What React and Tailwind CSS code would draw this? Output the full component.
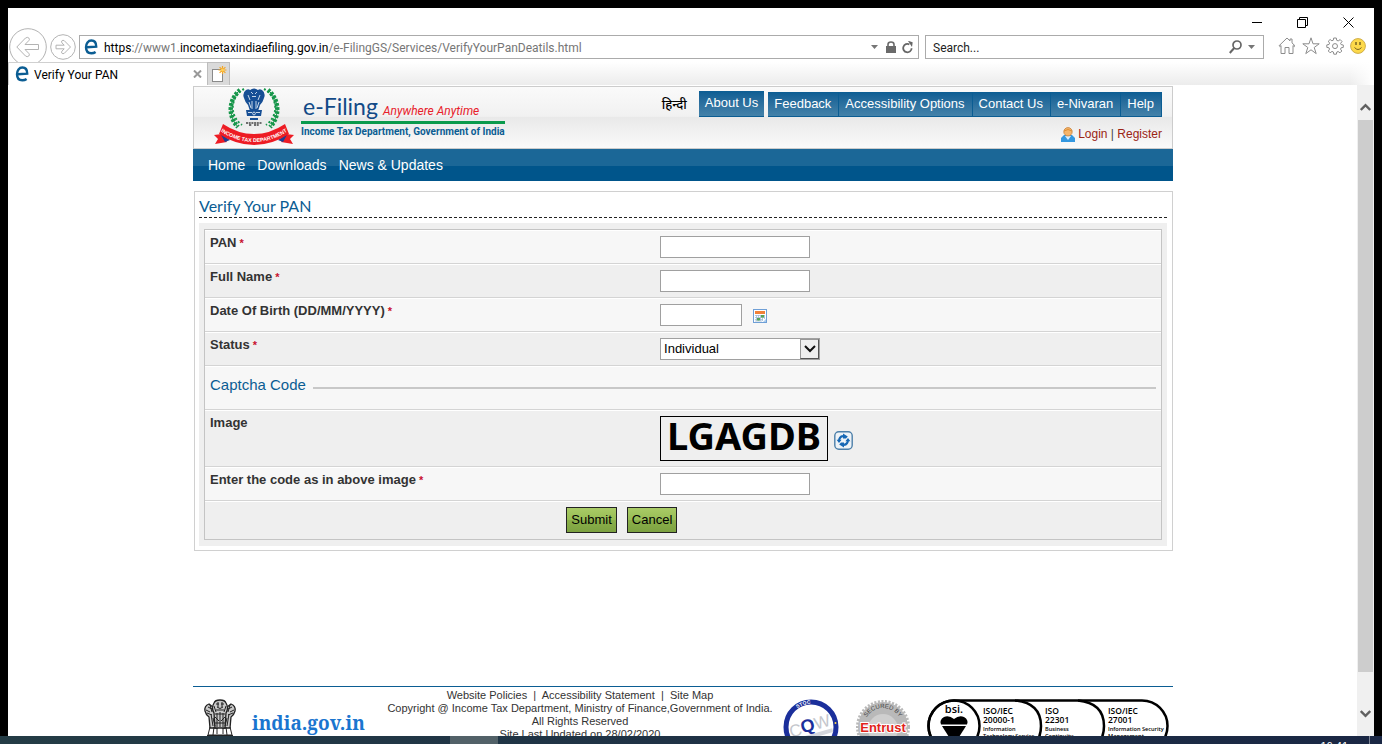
import React from "react";

const ieBlue = "#0b5d93";

function IELogo() {
  return (
    <svg width="14" height="16" viewBox="0 0 14 16" className="shrink-0" aria-hidden="true">
      <path d="M2.600 8.300L12.200 7.600C12.200 3.800 10.400 1.500 7.400 1.500C4.200 1.500 2 4.400 2 8.300C2 12 4 14.300 7.300 14.300C9 14.300 10.500 13.800 11.600 13" fill="none" stroke={ieBlue} strokeWidth="2.400" />
    </svg>
  );
}

function Caret() {
  return (
    <svg width="7" height="4" viewBox="0 0 7 4" aria-hidden="true">
      <path d="M0 0H7L3.5 4Z" fill="#767676" />
    </svg>
  );
}

function TitleBar() {
  return (
    <div className="flex h-5 items-end justify-end gap-[35px] pr-5">
      <button type="button" aria-label="Minimize">
        <svg width="10" height="11" viewBox="0 0 10 11" className="block"><path d="M0 5.5H10" stroke="#000" /></svg>
      </button>
      <button type="button" aria-label="Restore">
        <svg width="11" height="11" viewBox="0 0 11 11" className="block" fill="none" stroke="#000">
          <path d="M.5 2.5H8.5V10.5H.5ZM2.5 2.5V.5H10.5V8.5H8.5" />
        </svg>
      </button>
      <button type="button" aria-label="Close">
        <svg width="11" height="11" viewBox="0 0 11 11" className="block"><path d="M.5 .5L10.5 10.5M10.5 .5L.5 10.5" stroke="#000" /></svg>
      </button>
    </div>
  );
}

function Toolbar() {
  return (
    <div className="flex h-[34px] items-start overflow-hidden pl-px">
      <button type="button" aria-label="Back" className="shrink-0">
        <svg width="38" height="38" viewBox="0 0 38 38" className="block" fill="none" stroke="#b3b3b3">
          <circle cx="19" cy="19" r="18.3" />
          <path d="M7.8 19L16.5 10Q18.5 8.6 20 10.2Q21 11.4 19.8 12.6L16 16.5H29.5V21.5H16L19.8 25.4Q21 26.8 19.8 28Q18.2 29.4 16.5 28Z" />
        </svg>
      </button>
      <button type="button" aria-label="Forward" className="mt-[6px] ml-[3px] shrink-0">
        <svg width="26" height="26" viewBox="0 0 26 26" className="block" fill="none" stroke="#b3b3b3">
          <circle cx="13" cy="13" r="12.3" />
          <path d="M20.5 13L14.2 6.6Q12.8 5.8 11.8 6.9Q11.2 8 12 8.9L14.2 11.2H6V14.8H14.2L12 17.1Q11.2 18 11.8 19.1Q12.8 20.2 14.2 19.4Z" />
        </svg>
      </button>
      <div className="mt-[7px] ml-[3px] flex h-6 min-w-0 flex-[829] items-center border border-[#ababab] pr-[5px] pl-1 text-xs">
        <IELogo />
        <div role="textbox" aria-label="Address" className="ml-[6px] flex-1 truncate pt-px text-[#767676]">
          <span className="text-black">https</span>://www1.<span className="text-black">incometaxindiaefiling.gov.in</span>/e-FilingGS/Services/VerifyYourPanDeatils.html
        </div>
        <button type="button" aria-label="Show address list"><Caret /></button>
        <svg width="10" height="12" viewBox="0 0 10 12" className="ml-2" aria-hidden="true">
          <rect y="5" width="10" height="7" fill="#6a6a6a" />
          <path d="M2 6V3.5Q2 1 5 1T8 3.5V6" fill="none" stroke="#6a6a6a" strokeWidth="1.6" />
        </svg>
        <button type="button" aria-label="Refresh" className="ml-[6px]">
          <svg width="11" height="13" viewBox="0 0 11 13" className="block">
            <path d="M9.6 7.2A4.2 4.2 0 1 1 7.4 3.4" fill="none" stroke="#666" strokeWidth="1.8" />
            <path d="M5.4 0L10.4 1V5.6Z" fill="#666" transform="rotate(8 8 3)" />
          </svg>
        </button>
      </div>
      <div className="mt-[7px] ml-[6px] flex h-6 min-w-0 flex-[322] items-center border border-[#ababab] pr-2 pl-[7px] text-xs">
        <input aria-label="Search" placeholder="Search..." className="min-w-0 flex-1 pt-px outline-none placeholder:text-[#222]" />
        <svg width="13" height="14" viewBox="0 0 13 14" fill="none" stroke="#666" aria-hidden="true">
          <circle cx="8" cy="5" r="4" strokeWidth="1.7" /><path d="M5.2 8L.8 13" strokeWidth="2" />
        </svg>
        <button type="button" aria-label="Search options" className="ml-[6px]"><Caret /></button>
      </div>
      <div className="mt-[9px] mr-2 ml-[14px] flex shrink-0 gap-[6px]">
        <button type="button" aria-label="Home">
          <svg width="18" height="18" viewBox="0 0 18 18" fill="none" stroke="#8c8c8c" className="block">
            <path d="M3 8.5L1.8 9.6L1 8.8L9 1L12 3.9V2H14V5.9L17 8.8L16.2 9.6L15 8.5V16.5H11V10.5H7V16.5H3Z" />
          </svg>
        </button>
        <button type="button" aria-label="Favorites">
          <svg width="18" height="18" viewBox="0 0 18 18" fill="none" stroke="#8c8c8c" className="block">
            <path d="M9 .8L11 6.8H17.2L12.2 10.5L14.2 16.6L9 12.8L3.8 16.6L5.8 10.5L.8 6.8H7Z" />
          </svg>
        </button>
        <button type="button" aria-label="Tools">
          <svg width="18" height="18" viewBox="0 0 18 18" fill="none" stroke="#8c8c8c" className="block">
            <path d="M7.7 1H10.3L10.7 3.3L12.2 3.9L14.2 2.6L16 4.5L14.6 6.4L15.1 7.6L17.3 8V10.4L15.1 10.8L14.5 12.2L15.8 14L14 15.8L12.1 14.5L10.8 15L10.4 17.2H7.8L7.4 15L6 14.4L4.1 15.8L2.3 14L3.6 12.1L3 10.8L.8 10.4V7.9L3 7.5L3.6 6.1L2.3 4.2L4.1 2.5L5.9 3.8L7.3 3.2Z" />
            <circle cx="9" cy="9.1" r="2.5" />
          </svg>
        </button>
        <button type="button" aria-label="Send feedback">
          <svg width="16" height="18" viewBox="0 0 16 18" className="block">
            <circle cx="8" cy="9" r="7.4" fill="#fdd94a" stroke="#cfae4a" />
            <path d="M6 5V8M10 5V8" stroke="#7a6420" strokeWidth="1.500" />
            <path d="M4.500 10.5Q8 14.500 11.500 10.5" fill="none" stroke="#7a6420" />
          </svg>
        </button>
      </div>
    </div>
  );
}

function TabStrip() {
  return (
    <div className="flex h-[23px] items-stretch bg-white">
      <div className="flex w-[199px] items-center border-t border-l border-[#d0d0d0] bg-white pr-[5px] pl-[6px] text-xs text-black">
        <IELogo />
        <span className="ml-[5px] flex-1 pt-px">Verify Your PAN</span>
        <button type="button" aria-label="Close tab">
          <svg width="9" height="8" viewBox="0 0 9 8" className="block"><path d="M1 .5L8 7.5M8 .5L1 7.5" stroke="#999" strokeWidth="2" /></svg>
        </button>
      </div>
      <button type="button" aria-label="New tab" className="w-[23px] border border-b-0 border-[#bdbdbd] bg-[#dadada] pl-1">
        <svg width="15" height="16" viewBox="0 0 15 16" className="block">
          <rect x=".5" y="3.5" width="10" height="12" fill="#fff" stroke="#8a8a8a" />
          <path d="M10.5 0V8M6.5 4H14.5M7.6 1.1L13.4 6.9M13.4 1.1L7.6 6.9" stroke="#f5a623" strokeWidth="1.2" />
          <circle cx="10.5" cy="4" r="1.5" fill="#ffd25a" />
        </svg>
      </button>
      <div className="flex flex-1 bg-linear-to-b from-white to-[#ececec]">
        <div className="ml-auto w-6 bg-linear-to-r from-transparent to-white" />
      </div>
    </div>
  );
}

function DepartmentEmblem() {
  return (
    <svg width="82" height="58" viewBox="0 0 82 58" className="mt-px shrink-0" role="img" aria-label="Income Tax Department emblem">
      <g fill="none" stroke="#16964a">
        <path d="M26 2A25 25 0 0 0 24 39M54 2A25 25 0 0 1 56 39" strokeWidth="4.5" strokeDasharray="2.6 1.4" />
        <path d="M30 1A21 21 0 0 0 28 37M50 1A21 21 0 0 1 52 37" strokeWidth="2" strokeDasharray="2 2.2" />
        <path d="M26 2A25 25 0 0 0 24 39M54 2A25 25 0 0 1 56 39" strokeWidth="1" />
      </g>
      <g fill="#174f95">
        <circle cx="40" cy="6" r="5.500" />
        <path d="M32 2Q28 5 30 10Q31 14 34 17L36 23H44L46 17Q49 14 50 10Q52 5 48 2Q45 0 43 3H37Q35 0 32 2Z" />
        <path d="M32 22H48L47 28H33ZM36 30H44V32H36Z" />
      </g>
      <g fill="none" stroke="#d9e5f2" strokeWidth=".9">
        <path d="M37 4L39 6M43 4L41 6M38 8.5H42M34 7L36 12M46 7L44 12M38 13V21M42 13V21M35 14L37 20M45 14L43 20M34 24.500H38M42 24.500H46" />
        <circle cx="40" cy="25.500" r="1.400" />
      </g>
      <path d="M32 35H48M35 37H38M40 37H45" stroke="#444" strokeWidth="1.500" strokeDasharray="2 .7" />
      <path d="M8 46L0 47L4 51L1 56L13 54ZM72 46L80 47L76 51L79 56L67 54Z" fill="#ed1c24" />
      <path d="M6 45L11 54L16 52ZM74 45L69 54L64 52Z" fill="#1c3f94" />
      <path d="M9 36Q24 46 40 46Q56 46 71 36L75 46Q58 57 40 57Q22 57 5 46Z" fill="#ed1c24" />
      <path id="ribbon-arc" d="M5 42.500Q22 54 40 54Q58 54 75 42.500" fill="none" />
      <text fill="#fff" fontSize="5.300" fontWeight="700" fontFamily="Liberation Sans, sans-serif" textAnchor="middle">
        <textPath href="#ribbon-arc" startOffset="50%">INCOME TAX DEPARTMENT</textPath>
      </text>
    </svg>
  );
}

function UserIcon() {
  return (
    <svg width="14" height="15" viewBox="0 0 14 15" aria-hidden="true">
      <path d="M0 15V11L3 8H11L14 11V15Z" fill="#3498e0" />
      <path d="M4 9L7 13L10 9Z" fill="#d9efff" />
      <circle cx="7" cy="4.800" r="4.200" fill="#f5b56b" stroke="#c9823a" strokeWidth=".8" />
      <path d="M3 4Q7 1 11 4" stroke="#dd8f35" fill="none" />
    </svg>
  );
}

const menuLink = "border-b border-[#0b5d93] bg-linear-to-b from-[#0b5d93] to-[#4482a9] pt-[3px] text-[13px] leading-[18px] text-white";
const menu = ["Feedback", "Accessibility Options", "Contact Us", "e-Nivaran", "Help"];

function SiteHeader() {
  return (
    <header>
      <div className="flex h-[63px] justify-between border border-[#ccc] bg-[linear-gradient(#fafafa,#f1f1f1_48%,#e9e9e9_50%,#fafafa)] pr-[10px] pl-5">
        <div className="flex gap-[5px]">
          <DepartmentEmblem />
          <div className="pt-[6px]">
            <div className="flex h-[31px] items-baseline gap-[5px] border-b-3 border-[#0a9a4c] pl-[2px]">
              <span className="font-['Lato',sans-serif] text-[23px] leading-[27px] text-[#124a87]">e-Filing</span>
              <span className="font-['Roboto',sans-serif] text-xs text-[#e8212b] italic">Anywhere Anytime</span>
            </div>
            <div className="font-['Roboto',sans-serif] text-[10px] leading-4 font-bold whitespace-nowrap text-[#0b5d93]">Income Tax Department, Government of India</div>
          </div>
        </div>
        <div className="pt-1">
          <div className="flex items-end">
            <a href="#hindi" lang="hi" className="mr-3 text-[13px] leading-6 font-medium text-black">हिन्दी</a>
            <a href="#about" className={menuLink + " mr-1 h-[26px] px-[6px]"}>About Us</a>
            <nav className="flex h-[25px]" aria-label="Help menu">
              {menu.map((item) => (
                <a key={item} href="#menu" className={menuLink + " border-r pr-[7px] pl-[6px]"}>{item}</a>
              ))}
            </nav>
          </div>
          <div className="mt-[9px] flex items-center justify-end gap-[3px] text-xs leading-4 text-[#9b2414]">
            <UserIcon />
            <span><a href="#login">Login</a> <span className="text-[#444]">|</span> <a href="#register">Register</a></span>
          </div>
        </div>
      </div>
      <nav aria-label="Main" className="flex h-8 items-center gap-3 bg-[linear-gradient(#1b6797_53%,#00558b_53%)] pl-[15px] text-sm text-white">
        <a href="#home">Home</a>
        <a href="#downloads">Downloads</a>
        <a href="#news">News &amp; Updates</a>
      </nav>
    </header>
  );
}

const inputStyle = "h-[22px] border border-[#a0a0a0] bg-white px-1 text-[13px] outline-none";

function Row({ label, htmlFor, required, alt, height = "h-[34px]", children }) {
  return (
    <div className={"grid grid-cols-[47.6%_1fr] border-t border-t-white border-b border-b-[#d4d4d4] " + height + (alt ? " bg-[#efefef]" : " bg-[#f7f7f7]")}>
      <label htmlFor={htmlFor} className="pt-1 pl-[5px] text-[13px] leading-4 font-bold text-[#333]">
        {label}
        {required && <span className="text-[11px] text-[#c8102e]"> *</span>}
      </label>
      <div className="flex items-start pt-[5px]">{children}</div>
    </div>
  );
}

function CalendarIcon() {
  return (
    <svg width="14" height="14" viewBox="0 0 14 14" className="block">
      <rect x=".5" y=".5" width="13" height="13" fill="#fff" stroke="#6f9fd6" />
      <rect x="2" y="2" width="10" height="3" fill="#f0813a" />
      <path d="M2 6.500H12M2 8.500H12M2 10.500H10M2 12H9M3.500 6V12M5.500 6V12M7.500 6V12M9.500 6V12M11.500 6V10" stroke="#a3bbd6" strokeWidth=".8" />
      <path d="M8 6H11V8.500H8ZM4 9H7V11.500H4Z" fill="#57a457" />
      <path d="M10 13L13 10V13Z" fill="#a9ccee" />
    </svg>
  );
}

function RefreshIcon() {
  return (
    <svg width="19" height="19" viewBox="0 0 19 19" className="block">
      <rect x=".8" y=".8" width="17.400" height="17.400" rx="4" fill="#eef3f7" stroke="#4c7fa9" strokeWidth="1.400" />
      <path d="M5.200 10A4.200 4.200 0 0 1 9 5.200M13.800 9A4.200 4.200 0 0 1 10 13.800" fill="none" stroke="#1768b5" strokeWidth="2.200" />
      <path d="M9 2.600L13.800 5.400L12 7.600H9ZM10 16.400L5.200 13.600L7 11.400H10ZM2.600 8.800H7.600L5 12ZM11.400 10.200H16.400L14 7Z" fill="#1768b5" />
    </svg>
  );
}

function VerifyForm() {
  return (
    <main className="mt-[10px] ml-px border border-[#d0d0d0] bg-white pr-[5px] pb-1 pl-1">
      <h1 className="h-[26px] border-b border-dashed border-[#222] pt-1 font-['Lato',sans-serif] text-base leading-5 text-[#0b5d93]">Verify Your PAN</h1>
      <div className="mt-[5px] bg-[#efefef] px-[5px] pt-[6px] pb-[6px]">
        <form className="border border-[#c4c4c4]" onSubmit={(e) => e.preventDefault()}>
          <Row label="PAN" htmlFor="pan" required><input id="pan" className={inputStyle + " w-[150px]"} /></Row>
          <Row label="Full Name" htmlFor="name" required alt><input id="name" className={inputStyle + " w-[150px]"} /></Row>
          <Row label="Date Of Birth (DD/MM/YYYY)" htmlFor="dob" required>
            <input id="dob" className={inputStyle + " w-[82px]"} />
            <button type="button" aria-label="Pick a date" className="mt-[5px] ml-[11px]"><CalendarIcon /></button>
          </Row>
          <Row label="Status" htmlFor="status" required alt>
            <div className="relative">
              <select id="status" defaultValue="Individual" className="block h-[22px] w-[160px] appearance-none rounded-none border border-[#a0a0a0] bg-white pl-[3px] text-[13px] text-black outline-none">
                <option>Individual</option>
                <option>Company</option>
                <option>Trust</option>
              </select>
              <div className="pointer-events-none absolute inset-y-px right-px flex w-[19px] items-center justify-center border border-t-[#999] border-r-[#555] border-b-[#555] border-l-[#999] bg-[#efefef]">
                <svg width="12" height="8" viewBox="0 0 12 8" aria-hidden="true"><path d="M1 1L6 6L11 1" fill="none" stroke="#111" strokeWidth="2" /></svg>
              </div>
            </div>
          </Row>
          <div className="flex h-11 items-center border-t border-b border-t-white border-b-[#d4d4d4] bg-[#f7f7f7] px-[5px] pb-[6px]">
            <h2 className="text-[15px] leading-5 text-[#0b5d93]">Captcha Code</h2>
            <div className="mt-[6px] ml-[7px] h-[2px] flex-1 bg-[#c8c8c8]" />
          </div>
          <Row label="Image" htmlFor="captcha" alt height="h-[57px]">
            <div className="flex h-[45px] w-[168px] items-start justify-center border border-black font-['Noto_Sans',sans-serif] text-[38px] leading-9 font-bold text-black">LGAGDB</div>
            <button type="button" aria-label="Refresh captcha" className="mt-[15px] ml-[6px]"><RefreshIcon /></button>
          </Row>
          <Row label="Enter the code as in above image" htmlFor="captcha" required><input id="captcha" className={inputStyle + " w-[150px]"} /></Row>
          <div className="flex h-[38px] gap-[10px] border-t border-white bg-[#efefef] pt-[5px] pl-[37.8%]">
            <button type="submit" className="h-[26px] border border-[#222] bg-[linear-gradient(#a9cb66,#97bd55_50%,#8bb049_50%,#7da242)] px-1 text-[13px] text-black">Submit</button>
            <button type="button" className="h-[26px] border border-[#222] bg-[linear-gradient(#a9cb66,#97bd55_50%,#8bb049_50%,#7da242)] px-1 text-[13px] text-black">Cancel</button>
          </div>
        </form>
      </div>
    </main>
  );
}

function AshokaEmblem() {
  return (
    <svg width="34" height="50" viewBox="0 0 34 50" className="shrink-0" role="img" aria-label="State Emblem of India">
      <g fill="#c8c8c8" stroke="#222" strokeWidth="1.300">
        <path d="M6 5Q1 7 2 12Q3 16 6 18L7 29H14L15 12ZM28 5Q33 7 32 12Q31 16 28 18L27 29H20L19 12Z" />
        <path d="M11 4Q12 1 17 1Q22 1 23 4Q26 9 23 14L22 29H12L11 14Q8 9 11 4Z" />
      </g>
      <g fill="none" stroke="#222">
        <path d="M13 5H16M18 5H21M14 8Q17 11 20 8M13 11L21 11M14 14V28M17 13V28M20 14V28M12 18L16 22M22 18L18 22M3 11L7 13M31 11L27 13M5 8L9 10M29 8L25 10M8 15L10 27M26 15L24 27M12 24H22" />
        <path d="M4 14L9 16M30 14L25 16M7 6L9 13M27 6L25 13M11 7L13 13M23 7L21 13M12 15H22M15 3V8M19 3V8M10 19L12 27M24 19L22 27" />
        <path d="M7 28L5 36H29L27 28M11 28L10 36M14 29V35M20 29V35M23 28L24 36" />
        <path d="M4 37H30" strokeWidth="2" />
      </g>
    </svg>
  );
}

function StqcSeal() {
  return (
    <svg width="56" height="56" viewBox="0 0 56 56" className="shrink-0" role="img" aria-label="STQC website quality certificate">
      <circle cx="28" cy="28" r="25" fill="#fff" stroke="#1b2f9b" strokeWidth="5" />
      <path id="stqc-arc" d="M4.800 28A23.200 23.200 0 0 1 51.200 28" fill="none" />
      <text fontSize="5" fontWeight="700" fill="#fff" fontFamily="Liberation Sans, sans-serif"><textPath href="#stqc-arc" startOffset="30%">STQC</textPath></text>
      <g fontFamily="Liberation Sans, sans-serif" transform="rotate(-16 28 28)">
        <text x="6" y="33" fontSize="17" fill="#c4c6cc">C</text>
        <text x="32" y="32" fontSize="17" fill="#c4c6cc">W</text>
        <text x="18" y="32" fontSize="18" fontWeight="700" fill="#1b2f9b">Q</text>
        <path d="M8 37H48" stroke="#d4d7dd" strokeWidth="4" />
      </g>
      <circle cx="52.500" cy="24" r="1" fill="#ffd84a" />
    </svg>
  );
}

function EntrustSeal() {
  return (
    <svg width="56" height="56" viewBox="0 0 56 56" className="shrink-0" role="img" aria-label="Secured by Entrust SSL">
      <circle cx="28" cy="28" r="25" fill="#b9b9b9" stroke="#b9b9b9" strokeWidth="4" strokeDasharray="2 1.500" />
      <circle cx="28" cy="30" r="15" fill="#cfcfcf" />
      <path id="entrust-arc" d="M9 28A19 19 0 0 1 47 28" fill="none" />
      <text fontSize="6" fill="#444" fontFamily="Liberation Sans, sans-serif" textAnchor="middle"><textPath href="#entrust-arc" startOffset="50%">SECURED BY</textPath></text>
      <text x="28" y="33" fontSize="13" fontWeight="700" fill="#e2231a" stroke="#fff" strokeWidth="2" paintOrder="stroke" fontFamily="Liberation Sans, sans-serif" textAnchor="middle">Entrust</text>
      <text x="28" y="42" fontSize="8" fill="#555" fontFamily="Liberation Sans, sans-serif" textAnchor="middle">SSL</text>
    </svg>
  );
}

function BsiBadge() {
  return (
    <svg width="242" height="54" viewBox="0 0 242 54" className="shrink-0" role="img" aria-label="BSI certifications">
      <rect x="1.500" y="1.500" width="239" height="51" rx="25.500" fill="#fff" stroke="#000" strokeWidth="2.500" />
      <g fill="none" stroke="#000" strokeWidth="2.500">
        <circle cx="27" cy="27" r="25.500" />
        <path d="M88 1.500Q114 4 114 27T88 52.500M151 1.500Q177 4 177 27T151 52.500" />
      </g>
      <path d="M27 20Q22 16 17 18Q12 21 14 25.500H40Q42 21 37 18Q32 16 27 20Z" />
      <path d="M15 27H39L27 46Z" />
      <g fontFamily="Open Sans, sans-serif" fill="#000">
        <text x="27" y="14" fontSize="11" fontWeight="600" textAnchor="middle">bsi.</text>
        <g fontSize="8.500" fontWeight="600">
          <text x="56" y="15">ISO/IEC</text><text x="56" y="24">20000-1</text>
          <text x="118" y="15">ISO</text><text x="118" y="24">22301</text>
          <text x="181" y="15">ISO/IEC</text><text x="181" y="24">27001</text>
        </g>
        <g fontSize="5.600" fontWeight="600">
          <text x="56" y="32">Information</text><text x="56" y="39">Technology Service</text>
          <text x="118" y="32">Business</text><text x="118" y="39">Continuity</text>
          <text x="181" y="32">Information Security</text><text x="181" y="39">Management</text>
        </g>
      </g>
    </svg>
  );
}

function SiteFooter() {
  return (
    <footer className="mt-[135px] flex border-t border-[#0b5d93] pr-1 pl-[10px]">
      <div className="flex shrink-0 gap-[15px] pt-3">
        <AshokaEmblem />
        <div className="w-[125px] pt-3">
          <div className="font-['Noto_Serif','Liberation_Serif',serif] text-[19px] leading-6 font-bold text-[#1a75cf]">india.gov.in</div>
          <div className="pl-3 text-[8px] leading-3 text-[#1a75cf]">National Portal of India</div>
        </div>
      </div>
      <div className="min-w-0 flex-1 pt-[2px] text-center text-[11px] leading-[13px] whitespace-nowrap text-[#333]">
        <div><a href="#policies">Website Policies</a> &nbsp;|&nbsp; <a href="#access">Accessibility Statement</a> &nbsp;|&nbsp; <a href="#map">Site Map</a></div>
        <div>Copyright @ Income Tax Department, Ministry of Finance,Government of India.</div>
        <div>All Rights Reserved</div>
        <div>Site Last Updated on 28/02/2020</div>
      </div>
      <div className="flex shrink-0 gap-4 pt-3">
        <StqcSeal />
        <EntrustSeal />
        <BsiBadge />
      </div>
    </footer>
  );
}

function ScrollBar() {
  return (
    <div className="flex w-[17px] shrink-0 flex-col bg-[#f0f0f0] px-px">
      <button type="button" aria-label="Scroll up" className="flex h-[35px] items-center justify-center pt-2">
        <svg width="11" height="8" viewBox="0 0 11 8"><path d="M.8 7L5.500 2.200L10.200 7" fill="none" stroke="#606060" strokeWidth="2.400" /></svg>
      </button>
      <div className="flex-1 bg-[#cdcdcd]" />
      <button type="button" aria-label="Scroll down" className="flex h-16 items-center justify-center pt-5">
        <svg width="11" height="8" viewBox="0 0 11 8"><path d="M.8 1L5.500 5.800L10.200 1" fill="none" stroke="#606060" strokeWidth="2.400" /></svg>
      </button>
    </div>
  );
}

export default function App() {
  return (
    <div className="flex h-screen flex-col overflow-hidden bg-black pt-2 font-['Liberation_Sans','Noto_Sans',sans-serif]">
      <div className="mx-2 flex min-h-0 flex-1 flex-col bg-white">
        <div className="shrink-0 font-['Roboto',sans-serif]">
          <TitleBar />
          <Toolbar />
          <TabStrip />
        </div>
        <div className="flex min-h-0 flex-1">
          <div className="min-w-0 flex-1 overflow-hidden pt-px pl-px">
            <div className="mx-auto max-w-[980px]">
              <SiteHeader />
              <VerifyForm />
              <SiteFooter />
            </div>
          </div>
          <ScrollBar />
        </div>
      </div>
      <div className="flex h-2 shrink-0 overflow-hidden bg-linear-to-r from-[#243c45] to-[#1a2744]">
        <div className="ml-[450px] w-12 bg-[#526168]" />
        <div className="mr-[21px] ml-auto pt-1 text-[11px] leading-3 text-white">16:41</div>
        <div className="mr-3 w-px bg-[#7b8496]" />
      </div>
    </div>
  );
}
